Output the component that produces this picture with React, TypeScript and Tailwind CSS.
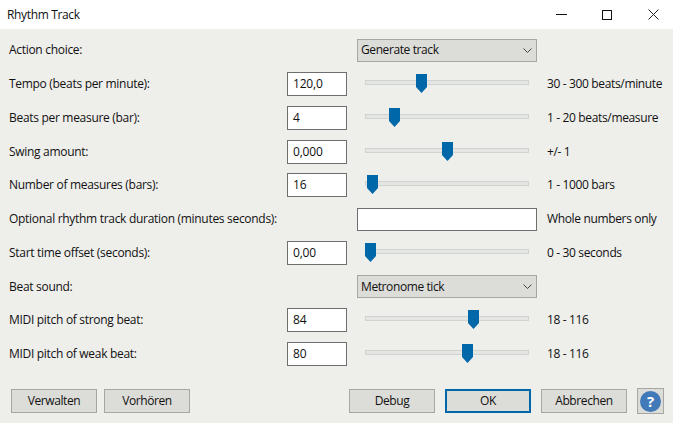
import React from "react";

type Row =
  | { kind: "choice"; label: string; value: string; hint?: string }
  | { kind: "text"; label: string; value: string; hint: string }
  | { kind: "slider"; label: string; value: string; pos: number; hint: string };

const rows: Row[] = [
  { kind: "choice", label: "Action choice:", value: "Generate track" },
  { kind: "slider", label: "Tempo (beats per minute):", value: "120,0", pos: 50, hint: "30 - 300 beats/minute" },
  { kind: "slider", label: "Beats per measure (bar):", value: "4", pos: 23, hint: "1 - 20 beats/measure" },
  { kind: "slider", label: "Swing amount:", value: "0,000", pos: 76, hint: "+/- 1" },
  { kind: "slider", label: "Number of measures (bars):", value: "16", pos: 1, hint: "1 - 1000 bars" },
  { kind: "text", label: "Optional rhythm track duration (minutes seconds):", value: "", hint: "Whole numbers only" },
  { kind: "slider", label: "Start time offset (seconds):", value: "0,00", pos: -1, hint: "0 - 30 seconds" },
  { kind: "choice", label: "Beat sound:", value: "Metronome tick" },
  { kind: "slider", label: "MIDI pitch of strong beat:", value: "84", pos: 102, hint: "18 - 116" },
  { kind: "slider", label: "MIDI pitch of weak beat:", value: "80", pos: 96, hint: "18 - 116" },
];

function Thumb({ pos }: { pos: number }) {
  return (
    <svg
      width="11"
      height="19"
      viewBox="0 0 11 19"
      className="absolute top-[-7px]"
      style={{ left: pos }}
    >
      <path d="M0 0H11V13L5.5 19L0 13Z" fill="#0067a9" />
    </svg>
  );
}

function Select({ value }: { value: string }) {
  return (
    <div className="flex h-[23px] w-[180px] items-center justify-between border border-[#a6a6a2] bg-[#dcdcd8] pl-[3px] pr-[4px]">
      <span className="tracking-[-0.4px]">{value}</span>
      <svg width="9" height="5" viewBox="0 0 9 5" fill="none" stroke="#444" strokeWidth="1">
        <path d="M0.5 0.5L4.5 4.5L8.5 0.5" />
      </svg>
    </div>
  );
}

function Button({ children, primary }: { children: React.ReactNode; primary?: boolean }) {
  return (
    <div
      className={
        "flex h-[24px] w-[86px] items-center justify-center bg-[#dcdcd8] tracking-[-0.4px] " +
        (primary ? "border-2 border-[#0067a9]" : "border border-[#a6a6a2]")
      }
    >
      {children}
    </div>
  );
}

export default function App() {
  return (
    <div
      className="flex h-[423px] w-[673px] flex-col overflow-hidden bg-[#eeeeeb] text-[12px] text-[#111]"
      style={{ fontFamily: '"Open Sans", "Noto Sans", sans-serif' }}
    >
      <header className="flex h-[29px] items-center justify-between bg-white pl-[7px]">
        <span className="tracking-[-0.35px]">Rhythm Track</span>
        <div className="flex items-center">
          <svg width="11" height="11" viewBox="0 0 11 11" className="mr-[35px]" stroke="#111" fill="none">
            <path d="M0 5.5H11" />
          </svg>
          <svg width="10" height="10" viewBox="0 0 10 10" className="mr-[36px]" stroke="#111" fill="none">
            <rect x="0.5" y="0.5" width="9" height="9" />
          </svg>
          <svg width="11" height="11" viewBox="0 0 11 11" className="mr-[14px]" stroke="#222" fill="none">
            <path d="M0.5 0.5L10.5 10.5M10.5 0.5L0.5 10.5" />
          </svg>
        </div>
      </header>

      <main className="mt-[4.6px] grid auto-rows-[33.75px] pl-[9px]">
        {rows.map((r) => (
          <div key={r.label} className="flex items-center">
            <span className="w-[278px] shrink-0 whitespace-nowrap tracking-[-0.3px]">{r.label}</span>
            {r.kind === "slider" && (
              <>
                <div className="flex h-[24px] w-[60px] shrink-0 items-center border border-[#6e6e6e] bg-white pl-[5px] tracking-[-0.2px]">
                  {r.value}
                </div>
                <div className="relative mb-[3px] ml-[18px] h-[5px] w-[164px] shrink-0 border border-[#d0d3cf] bg-[#e4e6e3]">
                  <Thumb pos={r.pos} />
                </div>
              </>
            )}
            {r.kind === "choice" && (
              <div className="ml-[70px]">
                <Select value={r.value} />
              </div>
            )}
            {r.kind === "text" && (
              <div className="ml-[70px] h-[23px] w-[180px] border border-[#6e6e6e] bg-white" />
            )}
            {r.hint && (
              <span
                className={
                  (r.kind === "slider" ? "ml-[18px]" : "ml-[10px]") + " whitespace-nowrap tracking-[-0.35px]"
                }
              >
                {r.hint}
              </span>
            )}
          </div>
        ))}
      </main>

      <footer className="mt-[17px] flex items-center pl-[11px]">
        <div className="flex gap-[7px]">
          <Button>Verwalten</Button>
          <Button>Vorhören</Button>
        </div>
        <div className="ml-[159px] flex gap-[10px]">
          <Button>Debug</Button>
          <Button primary>OK</Button>
          <Button>Abbrechen</Button>
        </div>
        <div className="ml-[10px] flex h-[26px] w-[27px] items-center justify-center border border-[#a6a6a2] bg-[#dcdcd8]">
          <div className="flex h-[21px] w-[21px] items-center justify-center rounded-full bg-[#4279b8] text-[15px] font-bold text-white">
            ?
          </div>
        </div>
      </footer>
    </div>
  );
}
